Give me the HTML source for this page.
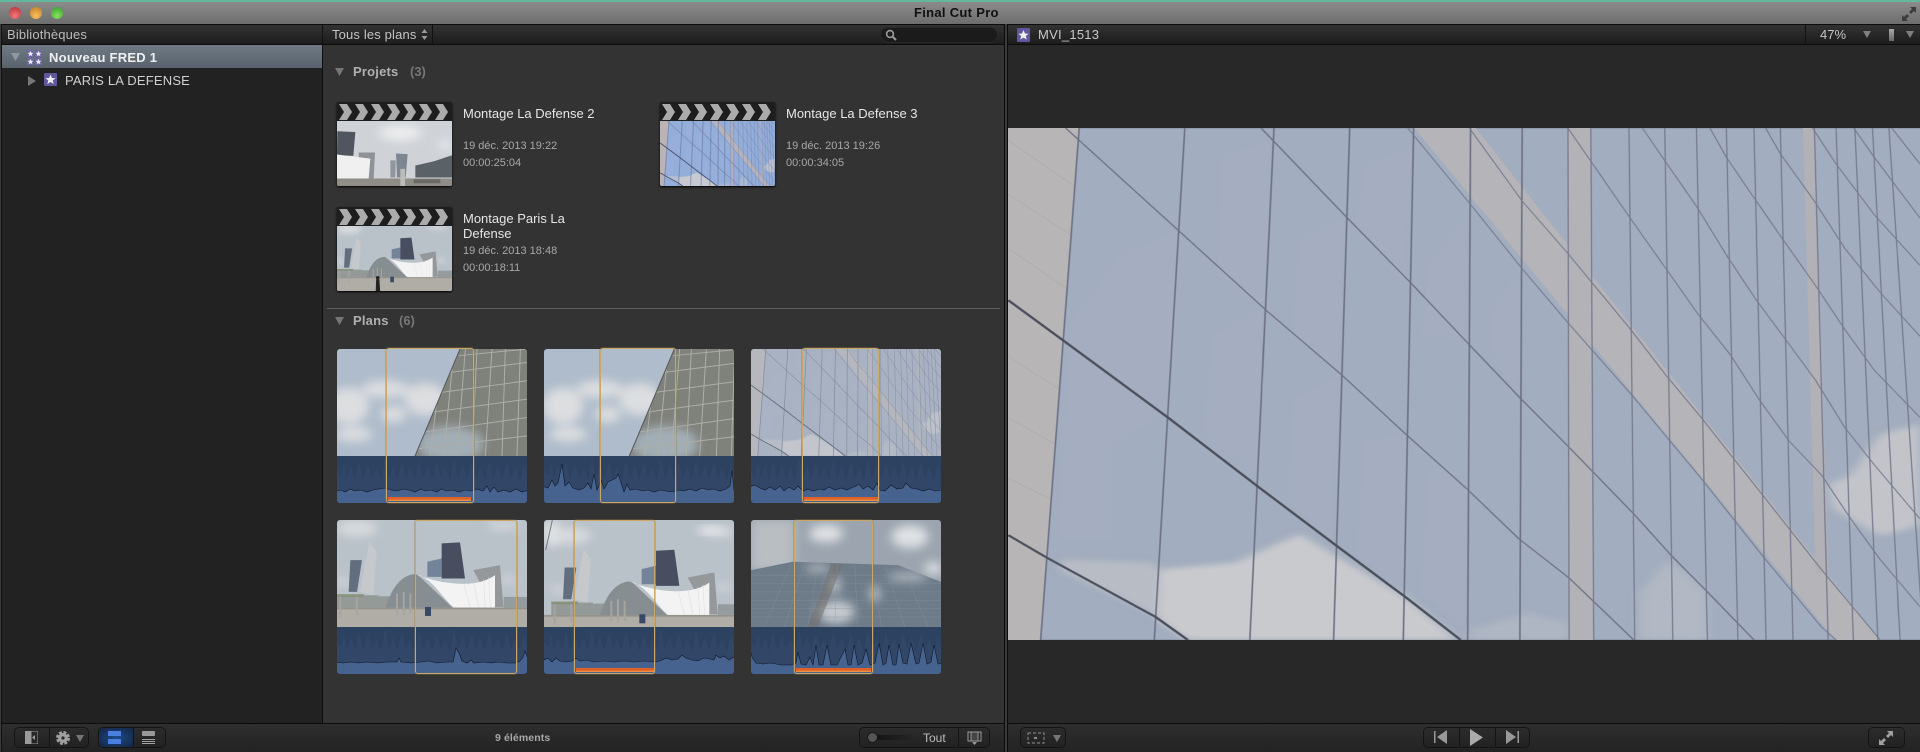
<!DOCTYPE html>
<html><head><meta charset="utf-8"><title>Final Cut Pro</title>
<style>
*{box-sizing:border-box}
html,body{margin:0;padding:0;background:#1a1a1a}
body{width:1920px;height:752px;position:relative;overflow:hidden;font-family:"Liberation Sans",sans-serif}
.a{position:absolute}
.t{position:absolute;white-space:nowrap;line-height:16px;height:16px}
.hdr{background:linear-gradient(#323232,#1d1d1d);border-top:1px solid #0c0c0c;border-bottom:1px solid #0d0d0d;height:21px;top:24px}
.foot{background:linear-gradient(#2e2e2e,#232323);border-top:1px solid #0c0c0c;top:723px;height:29px}
.grp{position:absolute;top:727px;height:21px;border:1px solid #141414;border-radius:5px;background:linear-gradient(#2c2c2c,#222)}
.sep{position:absolute;top:0;bottom:0;width:1px;background:#141414}
.dot{position:absolute;top:7px;width:12px;height:12px;border-radius:50%}
.card{position:absolute;width:190px;height:154px;border-radius:3px;overflow:hidden;background:#2d4160}
.card svg{position:absolute;left:0;display:block}
.fr{position:absolute;border:1px solid #c9a868;box-shadow:0 0 0 1px rgba(150,120,70,.35);border-radius:3px}
.or{position:absolute;height:4px;background:linear-gradient(#e0602a 0 50%,#f0a050);}
.clap{position:absolute;width:115px;height:84px;background:#1e1e1e;border-radius:2px;overflow:hidden;box-shadow:0 1px 2px #000}
.clap svg{position:absolute;left:0;display:block}
.ti{color:#e6e6e6;font-size:13px}
.su{color:#a8a8a8;font-size:11px}
.h{color:#b0b0b0;font-size:13px;font-weight:bold;letter-spacing:.2px}
.c{color:#777;font-size:13px;font-weight:bold}
.ln{stroke-width:var(--w)}
.ln2{stroke-width:calc(var(--w)*.75)}
.lt{stroke-width:calc(var(--w)*1.9)}
</style></head><body>

<svg width="0" height="0" style="position:absolute"><defs>
<filter id="bl" x="-30%" y="-30%" width="160%" height="160%"><feGaussianBlur stdDeviation="9"/></filter>
<filter id="bs" x="-40%" y="-40%" width="180%" height="180%"><feGaussianBlur stdDeviation="14"/></filter>
<clipPath id="wedge"><polygon points="234,320 369,0 570,0 570,320"/></clipPath>
<clipPath id="roof"><polygon points="0,150 125,125 440,135 568,185 568,320 0,320"/></clipPath>

<g id="facade">
<rect x="0" y="0" width="1600" height="1600" fill="#a2adbf"/>
<g fill="#abb3c3" opacity=".3">
<polygon points="205,400 300,330 289,860 190,960 190,1240 100,1240 120,600"/>
<polygon points="380,100 460,70 450,560 370,460"/>
<polygon points="510,350 585,290 575,740 500,640"/>
<polygon points="620,130 700,80 690,480 610,300"/>
<polygon points="730,420 795,300 790,650 720,640"/>
<polygon points="360,640 445,560 435,1040 350,930"/>
<polygon points="500,830 575,760 565,1240 490,1120"/>
<polygon points="620,950 690,930 685,1390 610,1290"/>
<polygon points="730,1040 795,1090 790,1500 720,1400"/>
<polygon points="840,560 885,440 885,810 835,670"/>
</g>
<g filter="url(#bl)">
<polygon fill="#b8bcc5" points="105,1300 265,1310 270,1470 105,1335"/>
<polygon fill="#c9cacd" points="270,1330 400,1310 510,1225 690,1410 780,1538 320,1538 270,1480"/>
<polygon fill="#bcc0c8" opacity=".6" points="1090,1400 1140,1300 1205,1400 1205,1538 1090,1538"/>
<polygon fill="#c2c4c9" points="1410,1080 1450,1050 1500,930 1568,900 1568,1200 1500,1230 1420,1150"/>
<polygon fill="#b8bdc6" opacity=".6" points="800,1510 900,1460 970,1490 970,1538 800,1538"/>
</g>
<polygon points="0,0 135,0 68,1568 0,1568" fill="#b8b5b6"/>
<polygon points="695,0 800,0 1500,1540 1425,1540" fill="#b5b4b8"/>
<polygon points="968,0 1007,0 1012,1568 970,1568" fill="#b3b2b7"/>
<polygon points="1368,0 1388,0 1412,1340 1390,1340" fill="#b2b1b6"/>
<g stroke="#a8a6a8" stroke-width="1.2" fill="none">
<path d="M14,60L130,200M14,220L125,345M14,380L115,500M14,700L105,800M14,880L95,960M14,1060L85,1120"/>
</g>
<g class="ln" stroke="#6d7284" fill="none">
<path d="M135,24L68,1568M315,24L262,1568M467,24L425,1568M596,24L568,1568M705,24L687,1568M802,24L797,1568M890,24L886,1568"/>
<path d="M112,24L303,325L455,565L583,755L695,935L795,1090L885,1240L970,1355L1080,1538"/>
<path d="M445,24L592,290L703,487L800,665L888,825L968,965L1080,1165L1145,1290L1205,1395L1285,1538"/>
</g>
<g class="ln2" stroke="#757a8c" fill="none">
<path d="M968,24L970,1568M1007,24L1012,1568M1072,24L1082,1568M1133,24L1147,1568M1187,24L1206,1568M1238,24L1258,1568M1285,24L1306,1568M1330,24L1352,1568M1388,24L1412,1568M1425,24L1455,1568M1457,24L1497,1568M1487,24L1535,1568M1515,24L1575,1568"/>
<path d="M695,24L802,250L890,440L968,600L1075,810L1195,1060L1300,1290L1400,1500L1425,1538"/>
<path d="M800,24L890,240L968,395L1075,620L1135,755L1195,880L1245,990L1300,1110L1400,1330L1500,1538"/>
<path d="M968,24L1072,285L1133,435L1190,575L1245,695L1295,830L1345,950L1400,1050L1450,1180L1500,1300L1568,1440"/>
<path d="M1095,24L1133,120L1187,255L1240,405L1290,535L1335,640L1390,770L1440,910L1490,1020L1568,1180"/>
<path d="M1210,24L1238,110L1285,230L1335,355L1390,490L1440,620L1490,740L1568,880"/>
<path d="M1305,24L1330,100L1388,240L1440,380L1500,510L1568,640"/>
<path d="M1385,24L1425,130L1490,280L1568,430"/>
<path d="M1455,24L1490,110L1568,290"/>
<path d="M1520,24L1568,130"/>
</g>
<g class="lt" stroke="#4b4e5b" fill="none">
<path d="M14,533L110,655L290,885L440,1085L570,1255L690,1410L785,1538"/>
<path d="M14,1228L80,1295L265,1470L320,1538"/>
</g>
</g>

<g id="glass">
<rect x="-30" width="640" height="320" fill="#afbccb"/>
<g filter="url(#bs)" fill="#dcdee0">
<ellipse cx="35" cy="170" rx="60" ry="55"/>
<ellipse cx="50" cy="255" rx="55" ry="22"/>
<ellipse cx="145" cy="120" rx="70" ry="26"/>
<ellipse cx="265" cy="150" rx="62" ry="48"/>
<ellipse cx="170" cy="195" rx="38" ry="24"/>
</g>
<polygon points="234,320 369,0 570,0 570,320" fill="#7f817b"/>
<g clip-path="url(#wedge)">
<ellipse cx="340" cy="285" rx="100" ry="55" fill="#a2aeb6" filter="url(#bs)"/>
<g stroke="#adaea7" stroke-width="3" fill="none">
<path d="M280,320L300,150M320,320L345,60M360,320L385,0M405,320L420,0M445,320L465,0M495,320L505,0M540,320L550,0"/>
<path d="M230,300L570,260M250,250L570,205M280,190L570,150M310,130L570,95M340,70L570,40M365,20L570,0"/>
</g>
</g>
<path d="M234,320L369,0" stroke="#55585a" stroke-width="3"/>
</g>

<g id="arena">
<rect x="-40" y="-40" width="660" height="400" fill="#b9c1c9"/>
<g filter="url(#bs)" fill="#d8dbde">
<ellipse cx="60" cy="25" rx="60" ry="24"/><ellipse cx="500" cy="15" rx="50" ry="12"/>
<ellipse cx="20" cy="185" rx="22" ry="10"/><ellipse cx="515" cy="180" rx="22" ry="10"/>
</g>
<polygon points="40,120 75,120 60,215 35,215" fill="#626d7e"/>
<polygon points="97,65 119,95 109,225 69,215" fill="#c5c9cc"/>
<polygon points="271,125 314,115 314,170 271,170" fill="#73849a"/>
<polygon points="314,70 369,67 384,175 314,175" fill="#484e60"/>
<polygon points="409,150 489,135 499,260 469,260" fill="#94989a"/>
<rect x="500" y="230" width="70" height="32" fill="#959ca0"/>
<path d="M125,262V228H170V262ZM0,262V225H125V262Z" fill="#949a98"/>
<rect x="0" y="222" width="80" height="8" fill="#88937a"/>
<path d="M145,265C165,195 200,160 240,162L350,265Z" fill="#868e91"/>
<path d="M234,162C285,170 320,240 354,265L474,265L474,165C420,205 320,195 234,162Z" fill="#f3f3f3"/>
<g stroke="#e0e1e3" stroke-width="2"><path d="M380,190L400,262M410,186L425,262M440,178L445,262M455,172L460,262"/></g>
<rect x="-40" y="262" width="660" height="100" fill="#b0ada6"/>
<rect x="-40" y="262" width="660" height="5" fill="#94928a"/>
<path d="M10,230V290M60,230V285M180,220V282M200,215V285M220,220V280" stroke="#a5a49e" stroke-width="6"/>
<rect x="264" y="260" width="18" height="27" fill="#3a4868"/>
</g>

<g id="pyr">
<rect width="568" height="320" fill="#9ca5af"/>
<rect width="130" height="150" fill="#b9bec3" filter="url(#bs)"/>
<g filter="url(#bs)" fill="#dfe2e5">
<ellipse cx="225" cy="40" rx="50" ry="26"/><ellipse cx="475" cy="50" rx="55" ry="34"/><ellipse cx="545" cy="145" rx="25" ry="18"/>
</g>
<polygon points="0,150 125,125 440,135 568,185 568,320 0,320" fill="#6e7c8a"/>
<g clip-path="url(#roof)">
<g filter="url(#bs)" fill="#c4c9ce">
<ellipse cx="255" cy="275" rx="55" ry="34"/><ellipse cx="250" cy="195" rx="16" ry="26"/><ellipse cx="200" cy="145" rx="38" ry="9"/><ellipse cx="370" cy="220" rx="14" ry="24"/><ellipse cx="470" cy="170" rx="60" ry="10"/>
</g>
<polygon points="240,130 275,130 200,320 170,320" fill="#73716d" opacity=".55"/>
<g stroke="#87929d" stroke-width="1" fill="none">
<path d="M0,190H568M0,215H568M0,240H568M0,265H568M0,290H568M0,165H568"/>
<path d="M40,320L120,130M100,320L160,130M170,320L200,130M250,320L260,130M320,320L310,130M390,320L360,130M460,320L400,130M530,320L450,130"/>
</g>
</g>
</g>

<path id="sp" d="M0,47V14L4,20L7,6L10,22L14,10L18,24L22,4L26,24L31,8L35,22L40,12L44,24L48,2L52,22L56,9L60,24L65,6L69,22L73,12L78,24L82,3L86,22L91,10L95,24L100,7L104,22L108,12L113,24L117,2L121,22L126,9L130,24L135,6L139,22L143,11L148,24L152,4L156,22L161,10L165,24L170,6L174,22L178,12L183,24L187,8L190,18V47Z" fill="#324768"/>
<g id="chev" fill="#ababab">
<polygon points="2,2 10,2 15,10 10,18 2,18 7,10"/><polygon points="18,2 26,2 31,10 26,18 18,18 23,10"/><polygon points="34,2 42,2 47,10 42,18 34,18 39,10"/><polygon points="50,2 58,2 63,10 58,18 50,18 55,10"/><polygon points="66,2 74,2 79,10 74,18 66,18 71,10"/><polygon points="82,2 90,2 95,10 90,18 82,18 87,10"/><polygon points="98,2 106,2 111,10 106,18 98,18 103,10"/>
</g>
<g id="tri"><polygon points="0,0 9,0 4.5,8" fill="#767676"/></g>
</defs></svg>

<!-- title bar -->
<div class="a" style="left:0;top:0;width:1920px;height:25px;background:linear-gradient(#8e8e8e,#6c6c6c)"></div>
<div class="a" style="left:0;top:0;width:1920px;height:2px;background:#62b89c"></div>
<div class="dot" style="left:9px;background:radial-gradient(circle at 50% 75%,#f47a7a,#b42a34)"></div>
<div class="dot" style="left:30px;background:radial-gradient(circle at 50% 75%,#f8c060,#c07a20)"></div>
<div class="dot" style="left:51px;background:radial-gradient(circle at 50% 75%,#8ae060,#329a30)"></div>
<div class="t" style="left:914px;top:5px;font-size:13px;font-weight:bold;color:#101010;letter-spacing:.3px">Final Cut Pro</div>
<svg class="a" style="left:1901px;top:6px" width="16" height="16" viewBox="0 0 16 16"><path d="M9,1H15V7L13,5L10,8L8,6L11,3ZM1,9L3,11L6,8L8,10L5,13L7,15H1Z" fill="#3c3c3c"/></svg>

<!-- panels -->
<div class="a" style="left:2px;top:45px;width:320px;height:678px;background:#222"></div>
<div class="a" style="left:323px;top:45px;width:681px;height:678px;background:#333"></div>
<div class="a" style="left:1008px;top:45px;width:912px;height:678px;background:#282828"></div>
<div class="a" style="left:322px;top:45px;width:1px;height:678px;background:#0e0e0e"></div>
<div class="a" style="left:1004px;top:24px;width:4px;height:728px;background:#3a3a3a;border-left:1px solid #0c0c0c;border-right:1px solid #0c0c0c"></div>
<div class="a" style="left:0;top:24px;width:2px;height:728px;background:#111;border-left:1px solid #3a3a3a"></div>

<!-- headers -->
<div class="a hdr" style="left:2px;width:1002px"></div>
<div class="a hdr" style="left:1008px;width:912px"></div>
<div class="a" style="left:322px;top:25px;width:1px;height:20px;background:#111"></div>
<div class="a" style="left:432px;top:25px;width:1px;height:20px;background:#111"></div>
<div class="t" style="left:7px;top:27px;font-size:13px;color:#bcbcbc;letter-spacing:.15px">Bibliothèques</div>
<div class="t" style="left:332px;top:27px;font-size:13px;color:#c4c4c4;letter-spacing:.15px">Tous les plans</div>
<svg class="a" style="left:421px;top:28px" width="7" height="13" viewBox="0 0 7 13"><path d="M3.5,1L6.5,5H.5ZM3.5,12L.5,8H6.5Z" fill="#999"/></svg>
<div class="a" style="left:880px;top:27px;width:118px;height:16px;border-radius:8px;background:#1b1b1b;border:1px solid #292929"></div>
<svg class="a" style="left:885px;top:29px" width="12" height="12" viewBox="0 0 12 12"><circle cx="5" cy="5" r="3.4" fill="none" stroke="#9a9a9a" stroke-width="1.6"/><path d="M7.5,7.5L11,11" stroke="#9a9a9a" stroke-width="2"/></svg>

<!-- sidebar -->
<div class="a" style="left:2px;top:45px;width:320px;height:23px;background:linear-gradient(#6f7a85,#58636e)"></div>
<svg class="a" style="left:11px;top:53px" width="10" height="9"><polygon points="0,0 9,0 4.5,8" fill="#8f979f"/></svg>
<svg class="a" style="left:27px;top:50px" width="15" height="15" viewBox="0 0 15 15"><rect width="7" height="7" fill="#6d66a8"/><rect x="8" width="7" height="7" fill="#6d66a8"/><rect y="8" width="7" height="7" fill="#6d66a8"/><rect x="8" y="8" width="7" height="7" fill="#6d66a8"/><g fill="#eee"><polygon points="3.5,.8 4.3,2.8 6.3,2.9 4.8,4.2 5.3,6.2 3.5,5.1 1.7,6.2 2.2,4.2 .7,2.9 2.7,2.8"/><polygon points="11.5,.8 12.3,2.8 14.3,2.9 12.8,4.2 13.3,6.2 11.5,5.1 9.7,6.2 10.2,4.2 8.7,2.9 10.7,2.8"/><polygon points="3.5,8.8 4.3,10.8 6.3,10.9 4.8,12.2 5.3,14.2 3.5,13.1 1.7,14.2 2.2,12.2 .7,10.9 2.7,10.8"/><polygon points="11.5,8.8 12.3,10.8 14.3,10.9 12.8,12.2 13.3,14.2 11.5,13.1 9.7,14.2 10.2,12.2 8.7,10.9 10.7,10.8"/></g></svg>
<div class="t" style="left:49px;top:50px;font-size:13px;font-weight:bold;color:#f0f0f0;letter-spacing:.25px">Nouveau FRED 1</div>
<svg class="a" style="left:28px;top:76px" width="8" height="10"><polygon points="0,0 8,5 0,10" fill="#777"/></svg>
<svg class="a" style="left:44px;top:73px" width="13" height="13" viewBox="0 0 13 13"><rect width="13" height="13" rx="1" fill="#5f589c"/><polygon points="6.5,1.5 7.9,5 11.5,5.2 8.7,7.5 9.7,11 6.5,9 3.3,11 4.3,7.5 1.5,5.2 5.1,5" fill="#eee"/></svg>
<div class="t" style="left:65px;top:73px;font-size:13px;color:#d0d0d0;letter-spacing:.2px">PARIS LA DEFENSE</div>

<!-- browser projects -->
<svg class="a" style="left:335px;top:68px" width="10" height="9"><use href="#tri"/></svg>
<div class="t h" style="left:353px;top:64px">Projets</div>
<div class="t c" style="left:410px;top:64px">(3)</div>

<div class="clap" style="left:337px;top:102px">
<svg width="115" height="20"><use href="#chev"/></svg>
<svg style="top:19px" width="115" height="65" viewBox="0 0 345 190" preserveAspectRatio="none">
<rect width="345" height="190" fill="#cfd3d8"/>
<g filter="url(#bs)" fill="#eeeff0"><ellipse cx="190" cy="35" rx="65" ry="20"/><ellipse cx="325" cy="70" rx="22" ry="10"/></g>
<polygon points="1,30 55,32 49,102 0,100" fill="#50565f"/>
<polygon points="65,92 114,92 110,168 68,168" fill="#8f9296"/>
<polygon points="160,115 176,115 175,165 160,165" fill="#90969b"/>
<polygon points="177,95 212,97 206,165 180,165" fill="#7e8791"/>
<polygon points="235,130 290,118 345,100 345,165 235,165" fill="#5a6268"/>
<polygon points="0,98 100,110 95,168 0,168" fill="#f0f0f0"/>
<rect y="168" width="345" height="22" fill="#8f8d86"/>
<rect x="190" y="140" width="14" height="50" fill="#bcbcb8"/>
<rect x="230" y="170" width="80" height="12" fill="#6b6a66"/>
</svg></div>
<div class="t ti" style="left:463px;top:106px">Montage La Defense 2</div>
<div class="t su" style="left:463px;top:138px">19 déc. 2013 19:22</div>
<div class="t su" style="left:463px;top:155px">00:00:25:04</div>

<div class="clap" style="left:660px;top:102px">
<svg width="115" height="20"><use href="#chev"/></svg>
<svg style="top:19px;filter:saturate(2.4);--w:8" width="115" height="65" viewBox="14 24 1554 1514" preserveAspectRatio="none"><use href="#facade"/></svg></div>
<div class="t ti" style="left:786px;top:106px">Montage La Defense 3</div>
<div class="t su" style="left:786px;top:138px">19 déc. 2013 19:26</div>
<div class="t su" style="left:786px;top:155px">00:00:34:05</div>

<div class="clap" style="left:337px;top:207px">
<svg width="115" height="20"><use href="#chev"/></svg>
<svg style="top:19px" width="115" height="65" viewBox="0 0 570 320" preserveAspectRatio="none"><use href="#arena" transform="translate(0,-10)"/><polygon points="192,320 194,262 210,262 214,320" fill="#222"/><circle cx="202" cy="255" r="9" fill="#222"/></svg></div>
<div class="t ti" style="left:463px;top:211px">Montage Paris La</div>
<div class="t ti" style="left:463px;top:226px">Defense</div>
<div class="t su" style="left:463px;top:243px">19 déc. 2013 18:48</div>
<div class="t su" style="left:463px;top:260px">00:00:18:11</div>

<div class="a" style="left:327px;top:308px;width:673px;height:1px;background:#5c5c5c"></div>
<svg class="a" style="left:335px;top:317px" width="10" height="9"><use href="#tri"/></svg>
<div class="t h" style="left:353px;top:313px">Plans</div>
<div class="t c" style="left:399px;top:313px">(6)</div>

<!-- clip cards -->
<div class="card" style="left:337px;top:349px">
<svg width="190" height="107" viewBox="0 0 570 320" preserveAspectRatio="none"><use href="#glass"/></svg>
<svg style="top:107px" width="190" height="47" viewBox="0 0 190 47"><use href="#sp"/><path d="M-2,49V35L4,34L8,36L13,33L18,35L24,34L30,36L36,34L42,33L48,32L54,34L60,35L66,33L72,34L78,36L84,33L88,35L94,34L100,36L104,33L110,35L116,34L122,36L128,34L134,35L140,33L146,35L150,30L153,36L157,31L161,36L167,34L173,36L179,33L185,36L192,34V49Z" fill="#46628e" stroke="#0d1728" stroke-width=".6"/></svg></div>
<div class="card" style="left:544px;top:349px">
<svg width="190" height="107" viewBox="0 0 570 320" preserveAspectRatio="none"><use href="#glass" transform="translate(22,0)"/></svg>
<svg style="top:107px" width="190" height="47" viewBox="0 0 190 47"><use href="#sp"/><path d="M-2,49V30L4,32L8,24L11,30L14,27L18,8L21,30L25,26L29,32L35,34L40,32L44,27L47,33L50,18L53,34L57,24L60,33L64,26L68,24L72,22L74,18L77,26L80,36L83,28L86,34L92,33L98,35L104,34L110,36L116,34L122,35L128,36L134,34L140,35L146,33L152,35L158,32L164,34L170,33L176,35L182,33L186,30L188,14L190,34L192,34V49Z" fill="#46628e" stroke="#0d1728" stroke-width=".6"/></svg></div>
<div class="card" style="left:751px;top:349px">
<svg style="--w:6" width="190" height="107" viewBox="14 24 1554 1514" preserveAspectRatio="none"><use href="#facade"/><rect x="14" y="24" width="1554" height="1514" fill="#b4bccb" opacity=".35"/></svg>
<svg style="top:107px" width="190" height="47" viewBox="0 0 190 47"><use href="#sp"/><path d="M-2,49V31L4,29L9,32L14,34L19,31L24,34L29,30L33,35L38,31L43,34L47,30L52,35L57,33L62,35L68,33L73,34L78,31L84,34L90,32L96,34L100,32L105,30L108,28L112,33L117,30L122,34L126,27L129,34L134,35L140,29L146,33L152,32L155,27L160,32L166,33L172,35L178,33L184,35L192,34V49Z" fill="#46628e" stroke="#0d1728" stroke-width=".6"/></svg></div>

<div class="card" style="left:337px;top:520px">
<svg width="190" height="107" viewBox="0 0 570 320" preserveAspectRatio="none"><use href="#arena"/></svg>
<svg style="top:107px" width="190" height="47" viewBox="0 0 190 47"><use href="#sp"/><path d="M-2,49V35L6,36L14,35L22,36L30,35L40,36L50,35L60,35L62,31L64,35L74,36L84,35L92,34L100,36L110,35L116,35L119,21L122,26L125,34L130,36L134,33L137,36L146,35L154,36L162,35L170,36L178,36L183,34L186,30L188,24L192,35V49Z" fill="#46628e" stroke="#0d1728" stroke-width=".6"/></svg></div>
<div class="card" style="left:544px;top:520px">
<svg width="190" height="107" viewBox="0 0 570 320" preserveAspectRatio="none"><use href="#arena" transform="translate(22,22)"/><ellipse cx="500" cy="30" rx="45" ry="10" fill="#eaecee" filter="url(#bs)"/><ellipse cx="25" cy="40" rx="26" ry="40" fill="#dfe2e4" filter="url(#bs)"/><path d="M5,90L25,0" stroke="#777b7d" stroke-width="3"/></svg>
<svg style="top:107px" width="190" height="47" viewBox="0 0 190 47"><use href="#sp"/><path d="M-2,49V34L4,31L8,35L12,31L16,34L22,35L28,34L32,31L36,34L42,33L50,35L60,34L70,35L80,34L90,35L100,34L110,35L116,34L122,31L128,33L134,32L138,28L142,31L148,33L154,34L160,31L166,32L170,33L172,28L176,31L180,29L185,33L190,30L192,31V49Z" fill="#46628e" stroke="#0d1728" stroke-width=".6"/></svg></div>
<div class="card" style="left:751px;top:520px">
<svg width="190" height="107" viewBox="0 0 568 320" preserveAspectRatio="none"><use href="#pyr"/></svg>
<svg style="top:107px" width="190" height="47" viewBox="0 0 190 47"><use href="#sp"/><path d="M-2,49V18L1,30L5,36L12,37L20,36L30,38L40,38L45,36L47,25L50,37L55,38L59,30L62,38L65,18L68,38L72,38L76,18L80,38L86,38L94,22L97,38L100,38L103,18L107,38L111,36L115,22L119,38L124,36L128,16L132,38L135,36L138,18L142,38L145,38L148,17L152,36L156,37L160,16L165,37L168,36L172,16L176,37L180,35L183,18L187,37L192,36V49Z" fill="#46628e" stroke="#0d1728" stroke-width=".6"/></svg></div>

<div class="or" style="left:388px;top:497px;width:83px"></div>
<div class="or" style="left:804px;top:497px;width:74px"></div>
<div class="or" style="left:576px;top:668px;width:78px"></div>
<div class="or" style="left:796px;top:668px;width:75px"></div>
<div class="fr" style="left:386px;top:348px;width:88px;height:155px"></div>
<div class="fr" style="left:600px;top:348px;width:76px;height:155px"></div>
<div class="fr" style="left:802px;top:348px;width:77px;height:155px"></div>
<div class="fr" style="left:415px;top:520px;width:102px;height:154px"></div>
<div class="fr" style="left:574px;top:520px;width:81px;height:154px"></div>
<div class="fr" style="left:794px;top:520px;width:79px;height:154px"></div>

<!-- viewer -->
<svg class="a" style="left:1017px;top:28px" width="13" height="14" viewBox="0 0 13 14"><rect width="13" height="14" rx="1" fill="#5f589c"/><polygon points="6.5,2 8,5.5 11.5,5.7 8.8,8 9.8,11.5 6.5,9.6 3.2,11.5 4.2,8 1.5,5.7 5,5.5" fill="#eee"/></svg>
<div class="t" style="left:1038px;top:27px;font-size:13px;color:#c8c8c8;letter-spacing:.25px">MVI_1513</div>
<div class="a" style="left:1805px;top:25px;width:1px;height:20px;background:#111"></div>
<div class="t" style="left:1820px;top:27px;font-size:13px;color:#c4c4c4">47%</div>
<svg class="a" style="left:1863px;top:31px" width="8" height="7"><polygon points="0,0 8,0 4,7" fill="#808080"/></svg>
<div class="a" style="left:1889px;top:29px;width:5px;height:12px;background:linear-gradient(#aaa,#666)"></div>
<svg class="a" style="left:1906px;top:31px" width="8" height="7"><polygon points="0,0 8,0 4,7" fill="#808080"/></svg>
<svg class="a" style="left:1000px;top:120px;--w:2.8" width="920" height="530" viewBox="0 0 1568 1568" preserveAspectRatio="none">
<clipPath id="vc"><rect x="14" y="24" width="1554" height="1514"/></clipPath>
<g clip-path="url(#vc)"><use href="#facade"/></g></svg>

<!-- footers -->
<div class="a foot" style="left:2px;width:1002px"></div>
<div class="a foot" style="left:1008px;width:912px"></div>

<div class="grp" style="left:14px;width:75px"><div class="sep" style="left:34px"></div></div>
<svg class="a" style="left:25px;top:731px" width="13" height="13" viewBox="0 0 13 13"><rect width="6" height="13" fill="#9a9a9a"/><rect x="6" width="7" height="13" fill="none" stroke="#9a9a9a"/><polygon points="10,4 10,9 7,6.5" fill="#9a9a9a"/></svg>
<svg class="a" style="left:56px;top:731px" width="14" height="14" viewBox="0 0 14 14"><circle cx="7" cy="7" r="5" fill="#a0a0a0"/><circle cx="7" cy="7" r="5.8" fill="none" stroke="#a0a0a0" stroke-width="2.4" stroke-dasharray="3 1.6"/><circle cx="7" cy="7" r="1.6" fill="#2a2a2a"/></svg>
<svg class="a" style="left:76px;top:735px" width="8" height="7"><polygon points="0,0 8,0 4,7" fill="#767676"/></svg>
<div class="grp" style="left:98px;width:68px"><div class="a" style="left:0;top:0;bottom:0;width:34px;border-radius:4px 0 0 4px;background:radial-gradient(#1e4a8c,#14243f)"></div><div class="sep" style="left:34px"></div></div>
<div class="a" style="left:108px;top:731px;width:13px;height:5px;background:#4a7fe0"></div>
<div class="a" style="left:108px;top:739px;width:13px;height:5px;background:#4a7fe0"></div>
<div class="a" style="left:142px;top:731px;width:13px;height:5px;border-radius:1px;background:#9a9a9a"></div>
<div class="a" style="left:142px;top:739px;width:13px;height:1px;background:#a0a0a0;box-shadow:0 2px #a0a0a0,0 4px #a0a0a0"></div>
<div class="t" style="left:495px;top:730px;font-size:10.5px;color:#a8a8a8;letter-spacing:.1px;font-weight:bold">9 éléments</div>

<div class="grp" style="left:859px;width:131px"><div class="sep" style="left:98px"></div></div>
<div class="a" style="left:874px;top:735px;width:38px;height:5px;border-radius:2px;background:linear-gradient(90deg,#141414,#242424)"></div>
<div class="a" style="left:867px;top:732px;width:11px;height:11px;border-radius:50%;background:#555;border:1px solid #181818"></div>
<div class="t" style="left:923px;top:730px;font-size:12px;color:#bcbcbc">Tout</div>
<svg class="a" style="left:967px;top:731px" width="15" height="14" viewBox="0 0 15 14"><rect x="1" y="1" width="13" height="9" fill="none" stroke="#9a9a9a"/><rect x="4" y="1" width="7" height="9" fill="#444" stroke="#9a9a9a"/><polygon points="5,11 10,11 7.5,14" fill="#9a9a9a"/></svg>
<div class="grp" style="left:1020px;width:46px"></div>
<svg class="a" style="left:1026px;top:731px" width="20" height="14" viewBox="0 0 20 14"><rect x="2" y="2" width="16" height="10" fill="none" stroke="#8f8f8f" stroke-dasharray="3 2"/><rect x="8" y="6" width="3" height="2" fill="#8f8f8f"/></svg>
<svg class="a" style="left:1053px;top:735px" width="8" height="7"><polygon points="0,0 8,0 4,7" fill="#767676"/></svg>

<div class="grp" style="left:1423px;width:107px"><div class="sep" style="left:35px"></div><div class="sep" style="left:71px"></div></div>
<svg class="a" style="left:1433px;top:730px" width="15" height="14" viewBox="0 0 15 14"><rect x="1" y="1" width="1.5" height="12" fill="#999"/><polygon points="14,0 14,14 4,7" fill="#999"/></svg>
<svg class="a" style="left:1469px;top:729px" width="15" height="17" viewBox="0 0 15 17"><polygon points="1,0 14,8.5 1,17" fill="#aaa"/></svg>
<svg class="a" style="left:1505px;top:730px" width="15" height="14" viewBox="0 0 15 14"><polygon points="1,0 11,7 1,14" fill="#999"/><rect x="12.5" y="1" width="1.5" height="12" fill="#999"/></svg>
<div class="grp" style="left:1868px;width:37px"></div>
<svg class="a" style="left:1878px;top:730px" width="16" height="16" viewBox="0 0 16 16"><path d="M9,1H15V7L13,5L10,8L8,6L11,3ZM1,9L3,11L6,8L8,10L5,13L7,15H1Z" fill="#a0a0a0"/></svg>
</body></html>
